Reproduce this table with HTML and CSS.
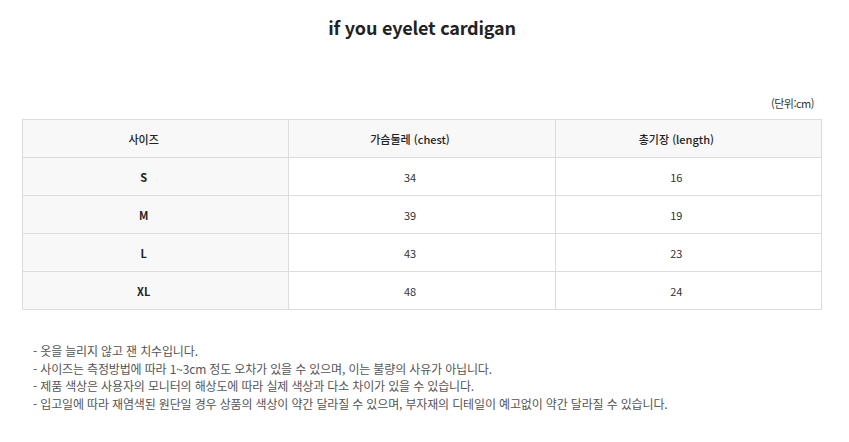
FILE: index.html
```html
<!DOCTYPE html>
<html lang="ko">
<head>
<meta charset="utf-8">
<link rel="stylesheet" href="styles.css">
</head>
<body>
<div class="page">
  <h1 class="title">if you eyelet cardigan</h1>
  <div class="unit">(단위:cm)</div>
  <table class="size-table">
    <thead>
      <tr><th>사이즈</th><th>가슴둘레 (chest)</th><th>총기장 (length)</th></tr>
    </thead>
    <tbody>
      <tr><td class="label">S</td><td>34</td><td>16</td></tr>
      <tr><td class="label">M</td><td>39</td><td>19</td></tr>
      <tr><td class="label">L</td><td>43</td><td>23</td></tr>
      <tr><td class="label">XL</td><td>48</td><td>24</td></tr>
    </tbody>
  </table>
  <ul class="notes">
    <li>- 옷을 늘리지 않고 잰 치수입니다.</li>
    <li>- 사이즈는 측정방법에 따라 1~3cm 정도 오차가 있을 수 있으며, 이는 불량의 사유가 아닙니다.</li>
    <li>- 제품 색상은 사용자의 모니터의 해상도에 따라 실제 색상과 다소 차이가 있을 수 있습니다.</li>
    <li>- 입고일에 따라 재염색된 원단일 경우 상품의 색상이 약간 달라질 수 있으며, 부자재의 디테일이 예고없이 약간 달라질 수 있습니다.</li>
  </ul>
</div>
</body>
</html>
```
FILE: styles.css
```css
html, body {
  margin: 0;
  padding: 0;
  background: #fff;
}
body {
  font-family: "Noto Sans CJK KR", "Noto Sans", sans-serif;
  color: #333;
}
.page {
  width: 800px;
  margin: 0 0 0 22px;
  padding-top: 13px;
}
.title {
  margin: 0;
  text-align: center;
  font-size: 18px;
  font-weight: 700;
  line-height: 28px;
  color: #222;
  letter-spacing: -0.2px;
}
.unit {
  margin-top: 53px;
  text-align: right;
  font-size: 11px;
  line-height: 18px;
  padding-right: 8px;
  color: #333;
  letter-spacing: -0.5px;
}
.size-table {
  margin-top: 7px;
  width: 800px;
  border-collapse: collapse;
  table-layout: fixed;
  font-size: 11px;
}
.size-table th,
.size-table td {
  border: 1px solid #dcdcdc;
  height: 37px;
  padding: 0 24px 0 0;
  text-align: center;
  vertical-align: middle;
  color: #333;
}
.size-table th {
  background: #f8f8f8;
  font-weight: 500;
  color: #222;
}
.size-table td.label {
  background: #f8f8f8;
  font-weight: 700;
  color: #222;
}
.notes {
  list-style: none;
  margin: 32px 0 0;
  padding: 0 0 0 11px;
  font-size: 12px;
  line-height: 17.7px;
  color: #555;
  letter-spacing: -0.15px;
}
.notes li {
  margin: 0;
}
```
